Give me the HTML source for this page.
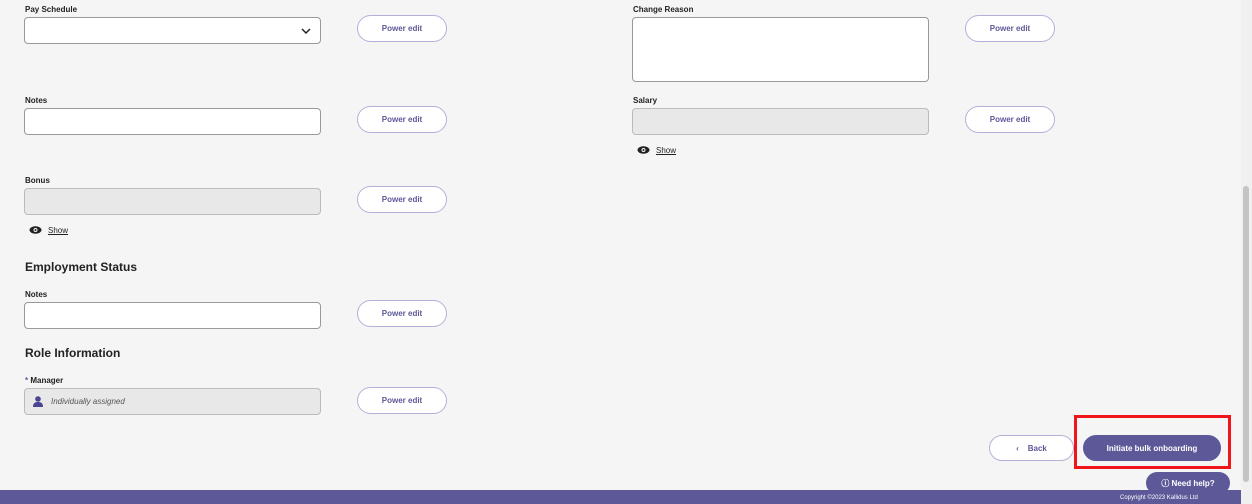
<!DOCTYPE html>
<html><head><style>
*{box-sizing:border-box;margin:0;padding:0}
body{width:1252px;height:504px;background:#f5f5f5;font-family:"Liberation Sans",sans-serif;position:relative;overflow:hidden;color:#222}
.a{position:absolute}
.lbl{font-size:8px;font-weight:bold;color:#222}
.in{border:1px solid #999;border-radius:4px;background:#fff;width:297px;height:27px}
.dis{background:#e8e8e8;border-color:#bbb}
.pe{width:90px;height:27px;border:1px solid #b5b0d8;border-radius:14px;background:#fff;color:#5d5898;font-size:8px;font-weight:bold;display:flex;align-items:center;justify-content:center}
.h{font-size:12px;font-weight:bold;color:#222}
.show{font-size:8px;text-decoration:underline;color:#222}
</style></head><body>
<div class="a lbl" style="left:25px;top:5px">Pay Schedule</div>
<div class="a in" style="left:24px;top:17px"><svg class="a" style="left:276px;top:10px" width="10" height="7" viewBox="0 0 10 7"><path d="M1 1l4 4 4-4" stroke="#222" stroke-width="1.5" fill="none"/></svg></div>
<div class="a pe" style="left:357px;top:15px">Power edit</div>
<div class="a lbl" style="left:633px;top:5px">Change Reason</div>
<div class="a in" style="left:632px;top:17px;height:65px"></div>
<div class="a pe" style="left:965px;top:15px">Power edit</div>

<div class="a lbl" style="left:25px;top:96px">Notes</div>
<div class="a in" style="left:24px;top:108px"></div>
<div class="a pe" style="left:357px;top:106px">Power edit</div>
<div class="a lbl" style="left:633px;top:96px">Salary</div>
<div class="a in dis" style="left:632px;top:108px"></div>
<div class="a pe" style="left:965px;top:106px">Power edit</div>
<svg class="a" style="left:637px;top:146px" width="13" height="8" viewBox="0 0 13 8"><ellipse cx="6.5" cy="4" rx="6" ry="3.7" fill="#222"/><circle cx="6.5" cy="4" r="2" fill="#f5f5f5"/><circle cx="6.5" cy="4" r="1" fill="#222"/></svg>
<div class="a show" style="left:656px;top:146px">Show</div>

<div class="a lbl" style="left:25px;top:176px">Bonus</div>
<div class="a in dis" style="left:24px;top:188px"></div>
<div class="a pe" style="left:357px;top:186px">Power edit</div>
<svg class="a" style="left:29px;top:226px" width="13" height="8" viewBox="0 0 13 8"><ellipse cx="6.5" cy="4" rx="6" ry="3.7" fill="#222"/><circle cx="6.5" cy="4" r="2" fill="#f5f5f5"/><circle cx="6.5" cy="4" r="1" fill="#222"/></svg>
<div class="a show" style="left:48px;top:226px">Show</div>

<div class="a h" style="left:25px;top:260px">Employment Status</div>
<div class="a lbl" style="left:25px;top:290px">Notes</div>
<div class="a in" style="left:24px;top:302px"></div>
<div class="a pe" style="left:357px;top:300px">Power edit</div>

<div class="a h" style="left:25px;top:346px">Role Information</div>
<div class="a lbl" style="left:25px;top:376px"><span style="color:#5d5898">*</span> Manager</div>
<div class="a in dis" style="left:24px;top:388px"><svg class="a" style="left:8px;top:7px" width="10" height="11" viewBox="0 0 10 11"><circle cx="5" cy="3" r="2.8" fill="#4a4590"/><path d="M0 11c0-4 2-5 5-5s5 1 5 5z" fill="#4a4590"/></svg><span class="a" style="left:26px;top:8px;font-size:8px;font-style:italic;color:#555">Individually assigned</span></div>
<div class="a pe" style="left:357px;top:387px">Power edit</div>

<div class="a pe" style="left:989px;top:435px;width:85px;height:26px;color:#5d5898">‹&nbsp;&nbsp;&nbsp;&nbsp;Back</div>
<div class="a pe" style="left:1083px;top:435px;width:138px;height:26px;background:#5d5898;color:#fff;border-color:#5d5898">Initiate bulk onboarding</div>
<div class="a" style="left:1074px;top:415px;width:157px;height:54px;border:3px solid #f0151a"></div>

<div class="a" style="left:0;top:490px;width:1241px;height:14px;background:#5d5898"></div>
<div class="a" style="left:1146px;top:472px;width:84px;height:22px;border-radius:11px;background:#5d5898;color:#fff;font-size:8px;font-weight:bold;display:flex;align-items:center;justify-content:center">ⓘ&nbsp;Need help?</div>
<div class="a" style="left:1120px;top:495px;font-size:6px;color:#fff">Copyright ©2023 Kallidus Ltd</div>
<div class="a" style="left:1241px;top:0;width:11px;height:504px;background:#f0f0f0"></div>
<div class="a" style="left:1243px;top:186px;width:6px;height:296px;background:#c4c4c4;border-radius:3px"></div>
</body></html>
